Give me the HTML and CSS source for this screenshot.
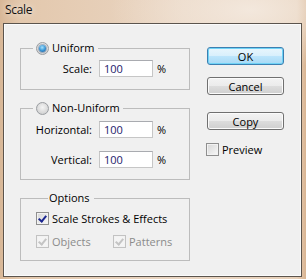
FILE: index.html
```html
<!DOCTYPE html>
<html lang="en">
<head>
    <meta charset="UTF-8">
    <title>Scale</title>
    <link rel="stylesheet" href="styles.css">
</head>
<body>
    <div class="window">
        <div class="title">Scale</div>
        <div class="dialog">
            <div class="groups">
                <fieldset class="group group-uniform">
                    <legend><span class="radio on"></span>Uniform</legend>
                    <div class="field">
                        <label for="scale">Scale:</label>
                        <input type="text" id="scale" value="100">
                        <span class="unit">%</span>
                    </div>
                </fieldset>

                <fieldset class="group group-non">
                    <legend><span class="radio"></span>Non-Uniform</legend>
                    <div class="field">
                        <label for="horizontal">Horizontal:</label>
                        <input type="text" id="horizontal" value="100">
                        <span class="unit">%</span>
                    </div>
                    <div class="field">
                        <label for="vertical">Vertical:</label>
                        <input type="text" id="vertical" value="100">
                        <span class="unit">%</span>
                    </div>
                </fieldset>

                <fieldset class="group group-options">
                    <legend class="text-legend">Options</legend>
                    <div class="check-row">
                        <span class="check"><span class="box on"></span>Scale Strokes &amp; Effects</span>
                    </div>
                    <div class="check-row">
                        <span class="check disabled objects"><span class="box on"></span>Objects</span>
                        <span class="check disabled"><span class="box on"></span>Patterns</span>
                    </div>
                </fieldset>
            </div>

            <div class="actions">
                <button class="btn default">OK</button>
                <button class="btn cancel">Cancel</button>
                <button class="btn copy">Copy</button>
                <span class="check preview"><span class="box"></span>Preview</span>
            </div>
        </div>
    </div>
</body>
</html>
```

FILE: styles.css
```css
body {
    margin: 0;
    font-family: "Open Sans", "Liberation Sans", sans-serif;
    font-size: 11px;
    color: #000;
}
.window {
    width: 306px;
    height: 279px;
    box-sizing: border-box;
    padding-left: 3px;
    background:
        radial-gradient(ellipse 140px 60px at 250px 10px, rgba(244,234,224,0.9), rgba(244,234,224,0)),
        linear-gradient(to right, #d8b797 0px, #e3c8ad 20px, #ead6c3 60%, #e6cfb8 97%, #d9b593 100%);
}
.title {
    height: 23px;
    box-sizing: border-box;
    padding: 2px 0 0 2px;
    font-size: 12px;
    line-height: 16px;
    letter-spacing: -0.3px;
    color: #111;
    text-shadow: 0 0 6px rgba(255,255,255,0.9);
}
.dialog {
    display: flex;
    width: 299px;
    height: 254px;
    box-sizing: border-box;
    padding: 17px 0 0 16px;
    background: #f0f0f0;
    border: 1px solid #5b544d;
    box-shadow: inset 0 0 0 1px #fbfbfb;
}
.groups { width: 170px; }
.group {
    width: 170px;
    box-sizing: border-box;
    margin: 0;
    padding: 0;
    border: 1px solid #bcbcbc;
    min-width: 0;
}
.group legend {
    display: flex;
    align-items: center;
    height: 14px;
    line-height: 14px;
    margin-left: 12px;
    padding: 0 3px;
    gap: 3px;
}
.group legend.text-legend { padding: 0 4px 0 1px; margin-left: 12px; }
.group-uniform { padding: 5px 0 12px; }
.group-non { margin-top: 11px; padding: 6px 0 11px; }
.group-non .field + .field { margin-top: 13px; }
.group-options { margin-top: 11px; padding: 7px 0 12px 15px; }

.field {
    display: flex;
    align-items: center;
    height: 17px;
}
.field label {
    width: 71px;
    text-align: right;
    margin-right: 7px;
    line-height: 14px;
}
.field input {
    width: 54px;
    height: 17px;
    box-sizing: border-box;
    margin: 0 4px 0 0;
    padding: 0 4px;
    border: 1px solid #c6c6c6;
    border-top-color: #a9abb0;
    background: #fff;
    font-family: "Open Sans", "Liberation Sans", sans-serif;
    font-size: 11px;
    color: #1d1a6a;
    outline: none;
}

.radio {
    width: 13px;
    height: 13px;
    box-sizing: border-box;
    border-radius: 50%;
    border: 1px solid #9a9da1;
    background: radial-gradient(circle at 50% 40%, #f4f4f4 0%, #dcdcdc 55%, #c4c7ca 100%);
    display: flex;
    align-items: center;
    justify-content: center;
}
.radio.on::after {
    content: "";
    width: 7px;
    height: 7px;
    border-radius: 50%;
    background: radial-gradient(circle at 45% 35%, #a8e1fb 0%, #3d9ad9 50%, #184f8c 100%);
    box-shadow: 0 0 0 1px rgba(40,80,130,0.35);
}

.check-row {
    display: flex;
    align-items: center;
    height: 13px;
}
.check-row + .check-row { margin-top: 10px; }
.check {
    display: flex;
    align-items: center;
    gap: 3px;
    line-height: 13px;
}
.check.objects { width: 77px; }
.check.disabled { color: #8b8b8b; }
.box {
    width: 13px;
    height: 13px;
    box-sizing: border-box;
    border: 1px solid #8f8f8f;
    background: linear-gradient(135deg, #d6d6d6, #f8f8f8);
    box-shadow: inset 0 0 0 1px #f2f2f2;
    display: flex;
    align-items: center;
    justify-content: center;
}
.box.on::after {
    content: "";
    width: 3px;
    height: 6px;
    margin-top: -2px;
    border: solid #1b2690;
    border-width: 0 2px 2px 0;
    transform: rotate(40deg);
}
.disabled .box {
    border-color: #c2c2c2;
    background: #f4f4f4;
}
.disabled .box.on::after { border-color: #c4c4c4; }

.actions {
    display: flex;
    flex-direction: column;
    width: 77px;
    margin: 6px 0 0 17px;
}
.btn {
    width: 77px;
    height: 18px;
    padding: 0;
    border: 1px solid #707070;
    border-radius: 3px;
    background: linear-gradient(#f3f3f3 0%, #ebebeb 50%, #dddddd 51%, #cfcfcf 100%);
    box-shadow: inset 0 0 0 1px #fbfbfb;
    font-family: "Open Sans", "Liberation Sans", sans-serif;
    font-size: 11px;
    line-height: 15px;
    color: #000;
}
.btn.default {
    border-color: #3c7fb1;
    background: linear-gradient(#e9f6fd 0%, #d8effc 50%, #bde5fc 51%, #a7d9f5 100%);
    box-shadow: inset 0 0 0 1px #6fd3f6;
}
.btn.cancel { margin-top: 12px; }
.btn.copy { margin-top: 17px; }
.check.preview { margin: 13px 0 0 -1px; }
```
